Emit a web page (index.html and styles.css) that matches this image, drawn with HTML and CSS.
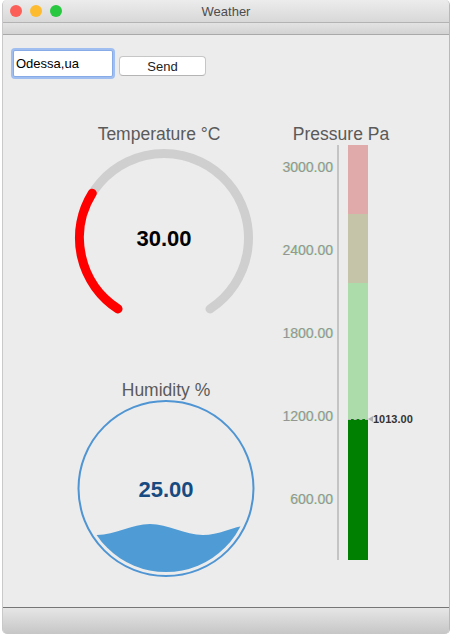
FILE: index.html
```html
<!DOCTYPE html>
<html>
<head>
<meta charset="utf-8">
<title>Weather</title>
<link rel="stylesheet" href="styles.css">
</head>
<body>
<div class="window">
  <div class="titlebar">
    <div class="lights">
      <span class="light red"></span>
      <span class="light yellow"></span>
      <span class="light green"></span>
    </div>
    <div class="title">Weather</div>
    <div></div>
  </div>
  <div class="toolbar"></div>
  <div class="content">
    <div class="search">
      <input class="city" type="text" value="Odessa,ua">
      <button class="send">Send</button>
    </div>
    <div class="main">
      <div class="left">
        <div class="gtitle temp-title">Temperature °C</div>
        <svg class="gauge" width="200" height="170" viewBox="0 0 200 170">
          <path d="M 54 160.9 A 84.5 84.5 0 1 1 146 160.9" fill="none" stroke="#cfcfcf" stroke-width="9" stroke-linecap="round"/>
          <path d="M 54 160.9 A 84.5 84.5 0 0 1 28.3 45.2" fill="none" stroke="#ff0000" stroke-width="9" stroke-linecap="round"/>
          <text class="gauge-value" x="100" y="90" text-anchor="middle" dominant-baseline="central">30.00</text>
        </svg>
        <div class="gtitle hum-title">Humidity %</div>
        <svg class="hum" width="200" height="180" viewBox="0 0 200 180">
          <defs>
            <clipPath id="inner"><circle cx="102" cy="88.5" r="83.5"/></clipPath>
          </defs>
          <circle cx="102" cy="88.5" r="87.5" fill="none" stroke="#4f95d3" stroke-width="2"/>
          <path clip-path="url(#inner)" fill="#4f9bd6" d="M -20 124 C -2 124 15 135 33 135 C 51 135 68 124 86 124 C 104 124 121 135 139 135 C 157 135 174 124 192 124 L 192 190 L -20 190 Z"/>
          <text class="hum-value" x="102" y="89.5" text-anchor="middle" dominant-baseline="central">25.00</text>
        </svg>
      </div>
      <div class="right">
        <div class="gtitle">Pressure Pa</div>
        <div class="pchart">
          <div class="ticks">
            <span class="tick">3000.00</span>
            <span class="tick">2400.00</span>
            <span class="tick">1800.00</span>
            <span class="tick">1200.00</span>
            <span class="tick">600.00</span>
          </div>
          <div class="axis"></div>
          <div class="bar">
            <div class="seg seg-high"></div>
            <div class="seg seg-mid"></div>
            <div class="seg seg-low"></div>
            <div class="seg seg-value"></div>
            <div class="marker">
              <span class="dash"></span>
              <span class="arrow"></span>
              <span class="mlabel">1013.00</span>
            </div>
          </div>
        </div>
      </div>
    </div>
  </div>
  <div class="footer"></div>
</div>
</body>
</html>
```

FILE: styles.css
```css
html, body {
  margin: 0;
  padding: 0;
  background: #ffffff;
  font-family: "Liberation Sans", Arial, sans-serif;
}

.window {
  margin-left: 2px;
  width: 448px;
  height: 634px;
  box-sizing: border-box;
  border-left: 1px solid #c9c9c9;
  border-right: 1px solid #b9b9b9;
  border-radius: 5px;
  overflow: hidden;
  background: #ececec;
  display: flex;
  flex-direction: column;
}

.titlebar {
  height: 22px;
  border-bottom: 1px solid #b3b3b3;
  background: linear-gradient(#ececec, #d8d8d8);
  display: grid;
  grid-template-columns: 1fr auto 1fr;
  align-items: center;
  flex: none;
}

.lights {
  display: flex;
  gap: 8px;
  padding-left: 7px;
}

.light {
  width: 12px;
  height: 12px;
  border-radius: 50%;
  display: block;
}
.red { background: #fc5f57; }
.yellow { background: #fdbc2f; }
.green { background: #28c840; }

.title {
  font-size: 13px;
  color: #4d4d4d;
}

.toolbar {
  height: 11px;
  border-bottom: 1px solid #a9a9a9;
  background: linear-gradient(#e3e3e3, #d3d3d3);
  flex: none;
}

.content {
  height: 573px;
  box-sizing: border-box;
  border-bottom: 1px solid #767676;
  flex: none;
}

.search {
  display: flex;
  align-items: flex-end;
  padding: 15px 0 0 10px;
}

.city {
  width: 100px;
  height: 27px;
  box-sizing: border-box;
  margin: 0;
  padding: 0 2px;
  border: 1px solid #86abe6;
  box-shadow: 0 0 0 2px #a0bff0;
  border-radius: 2px;
  background: #ffffff;
  font-family: "Liberation Sans", Arial, sans-serif;
  font-size: 13px;
  color: #000;
  outline: none;
}

.send {
  width: 87px;
  height: 20px;
  margin: 0 0 1px 6px;
  padding: 0;
  box-sizing: border-box;
  background: #ffffff;
  border: 1px solid #c6c6c6;
  border-bottom-color: #b4b4b4;
  border-radius: 4px;
  font-family: "Liberation Sans", Arial, sans-serif;
  font-size: 13px;
  color: #222;
}

.main {
  display: flex;
  margin-top: 47px;
  padding-left: 61px;
}

.left {
  width: 200px;
  display: flex;
  flex-direction: column;
}

.right {
  width: 154px;
  display: flex;
  flex-direction: column;
}

.gtitle {
  font-size: 17.5px;
  line-height: 20px;
  height: 20px;
  color: #5a5a5a;
  text-align: center;
}

.temp-title {
  padding-right: 10px;
}

.hum-title {
  padding-left: 4px;
  margin-top: 62px;
}

.gauge {
  display: block;
  margin-top: 4px;
}

.hum {
  display: block;
}

.gauge-value {
  font-family: "Liberation Sans", Arial, sans-serif;
  font-weight: bold;
  font-size: 22px;
  fill: #000;
}

.hum-value {
  font-family: "Liberation Sans", Arial, sans-serif;
  font-weight: bold;
  font-size: 22px;
  fill: #174a80;
}

.pchart {
  display: flex;
  height: 415px;
  margin-top: 1px;
}

.ticks {
  width: 69px;
  display: flex;
  flex-direction: column;
  align-items: flex-end;
  gap: 67px;
  padding-top: 14px;
  box-sizing: border-box;
}

.tick {
  display: block;
  height: 16px;
  line-height: 16px;
  font-size: 14px;
  color: #959595;
  text-shadow: -0.5px 0 rgba(235, 235, 0, 0.35), 0.5px 0 rgba(0, 220, 240, 0.4);
}

.axis {
  width: 2px;
  margin-left: 4px;
  background: #c4c4c4;
}

.bar {
  position: relative;
  width: 20px;
  margin-left: 9px;
  display: flex;
  flex-direction: column;
}

.seg { flex: none; }
.seg-high { height: 69px; background: #dfaaa9; }
.seg-mid { height: 69px; background: #c5c4a9; }
.seg-low { height: 136px; background: #abdcaa; }
.seg-value { height: 141px; background: #008000; }

.marker {
  position: absolute;
  left: 0;
  top: 274px;
  display: flex;
  align-items: center;
  height: 0;
}

.dash {
  width: 20px;
  height: 0;
  border-top: 1px dashed #b5b5b5;
}

.arrow {
  width: 0;
  height: 0;
  border-top: 3px solid transparent;
  border-bottom: 3px solid transparent;
  border-right: 5px solid #b0b0b0;
}

.mlabel {
  font-size: 11px;
  font-weight: bold;
  color: #333;
  white-space: nowrap;
}

.footer {
  flex: 1;
  background: linear-gradient(#e6e6e6, #c6c6c6);
}
```
